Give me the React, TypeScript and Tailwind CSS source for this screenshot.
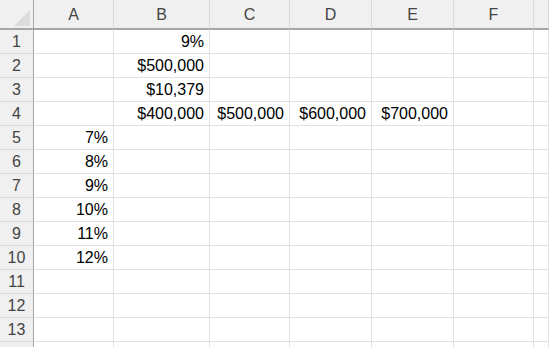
import React from 'react';

const cols = ['A', 'B', 'C', 'D', 'E', 'F', ''];

// value by row (1-based) then column index (0 = A)
const data: Record<number, Record<number, string>> = {
  1: { 1: '9%' },
  2: { 1: '$500,000' },
  3: { 1: '$10,379' },
  4: { 1: '$400,000', 2: '$500,000', 3: '$600,000', 4: '$700,000' },
  5: { 0: '7%' },
  6: { 0: '8%' },
  7: { 0: '9%' },
  8: { 0: '10%' },
  9: { 0: '11%' },
  10: { 0: '12%' },
};

const rows = Array.from({ length: 14 }, (_, i) => i + 1);

const App = () => {
  return (
    <div
      className="relative w-[549px] h-[347px] overflow-hidden bg-white text-[16px] text-black"
      style={{ fontFamily: '"Liberation Sans", Arial, sans-serif' }}
    >
      <div className="absolute left-[33px] top-[6px] w-px h-px bg-black" />
      <div className="grid grid-cols-[34px_80px_96px_80px_82px_82px_80px_1fr]">
        {/* Corner */}
        <div className="relative h-[30px] bg-[#f0f0f0] border-r border-r-[#a6a6a6] border-b-2 border-b-[#a6a6a6]">
          <div
            className="absolute left-[14px] top-[10px] w-[16px] h-[16px] bg-[#dcdcdc]"
            style={{ clipPath: 'polygon(100% 0, 100% 100%, 0 100%)' }}
          />
        </div>
        {cols.map((c, i) => (
          <div
            key={i}
            className="h-[30px] flex items-center justify-center pt-[2px] bg-[#f0f0f0] text-[#444444] border-r border-r-[#d9d9d9] border-b-2 border-b-[#a6a6a6]"
          >
            {c}
          </div>
        ))}

        {rows.map((r) => (
          <React.Fragment key={r}>
            {/* row 14 only peeks in at the bottom edge, its number is out of view */}
            <div className="h-[24px] flex items-center justify-center bg-[#f0f0f0] text-[#444444] border-r border-r-[#a6a6a6] border-b border-b-[#d9d9d9]">
              {r < 14 ? r : ''}
            </div>
            {cols.map((_, ci) => (
              <div
                key={ci}
                className="h-[24px] flex items-center justify-end pr-[5px] border-r border-b border-[#e1e1e1] whitespace-nowrap"
              >
                {data[r]?.[ci] ?? ''}
              </div>
            ))}
          </React.Fragment>
        ))}
      </div>
    </div>
  );
};

export default App;
